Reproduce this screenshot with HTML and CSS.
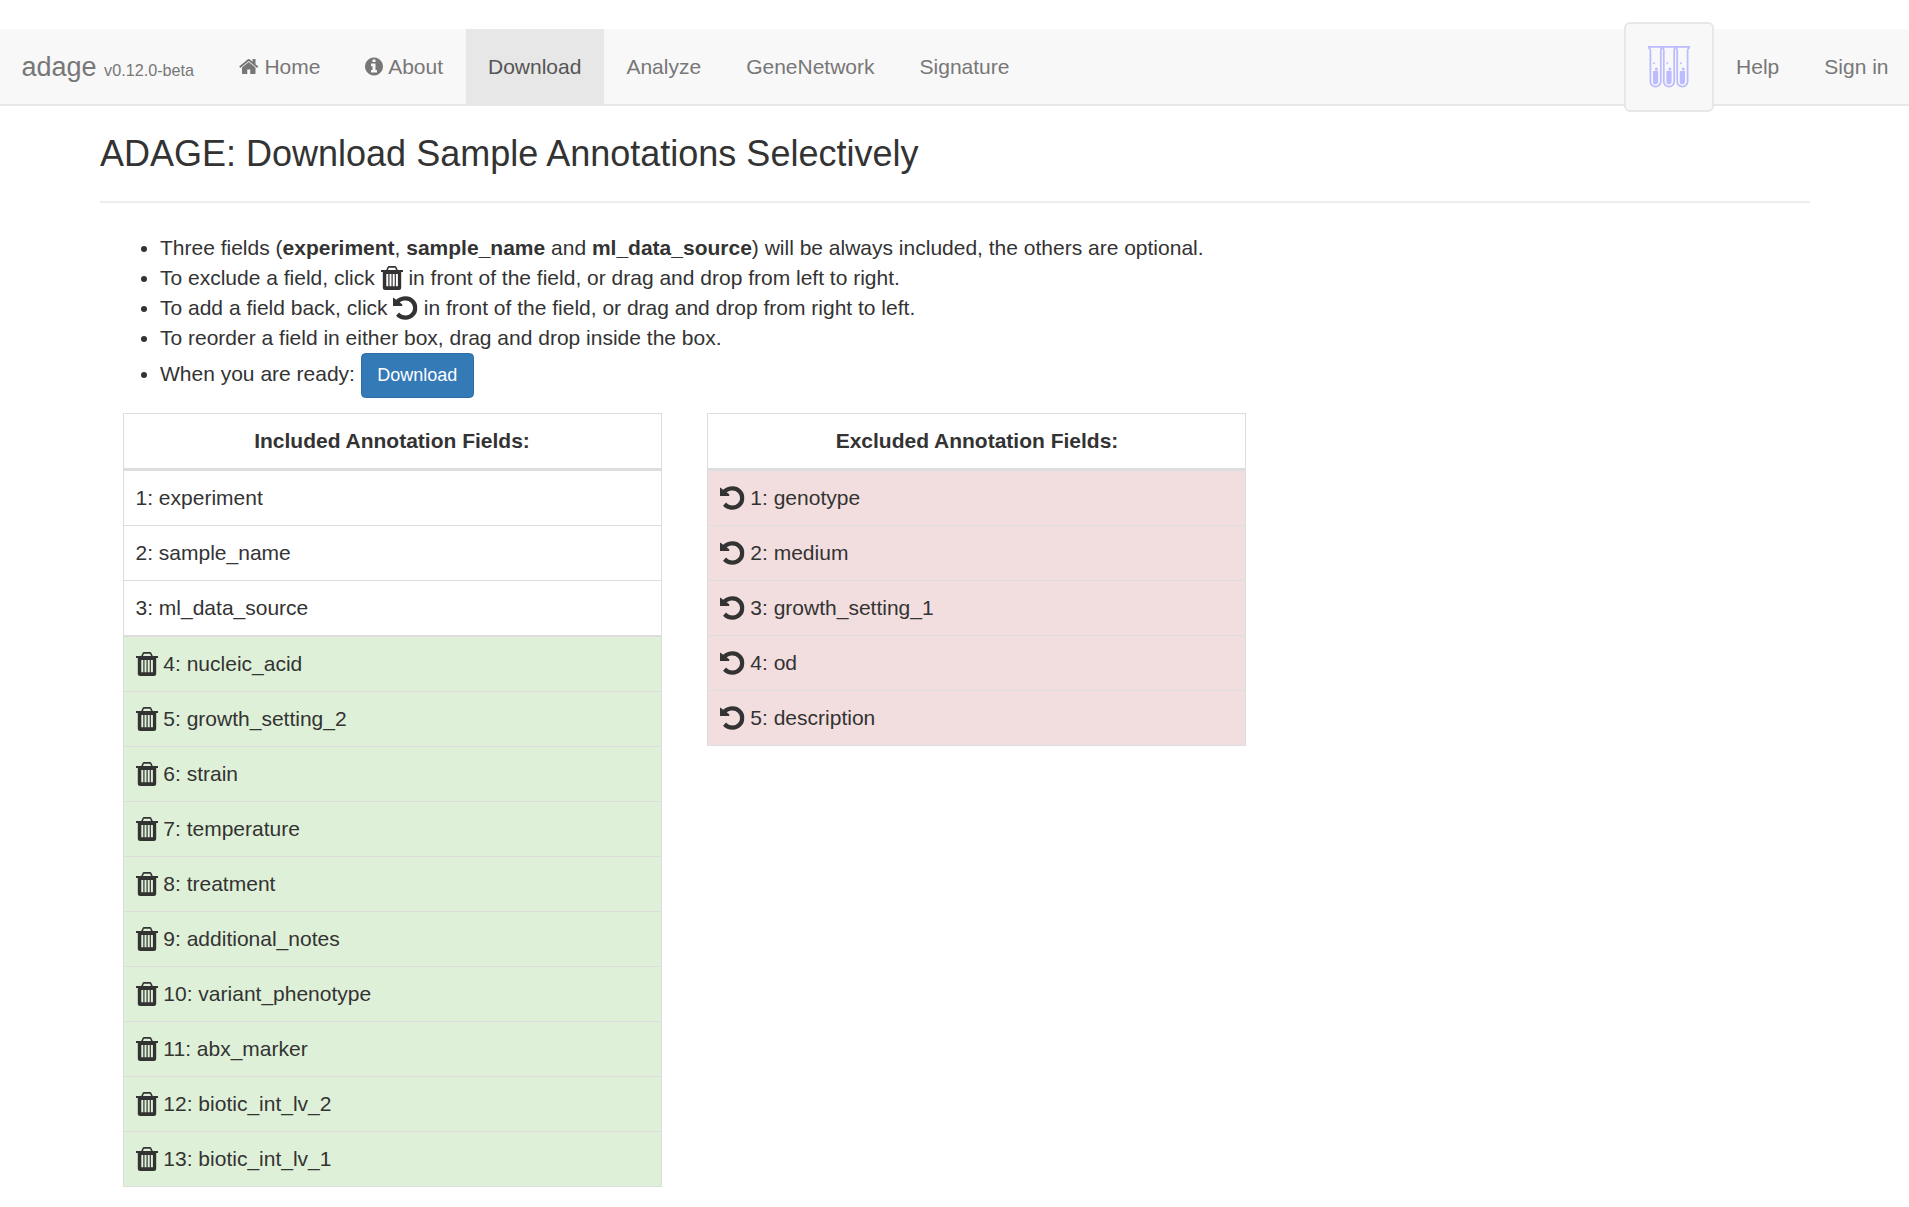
FILE: index.html
```html
<!DOCTYPE html>
<html lang="en">
<head>
<meta charset="utf-8">
<title>adage</title>
<link rel="stylesheet" href="styles.css">
</head>
<body>
<svg class="sprite" aria-hidden="true">
  <symbol id="trash" viewBox="0 0 22 24">
    <path fill-rule="evenodd" d="M0 4h5.200L6.600.9Q7 0 8 0h6q1 0 1.400.9L16.800 4H22v1.900H20.200V21.500q0 2.500-2.500 2.500H4.300Q1.800 24 1.800 21.500V5.900H0zM7 4h8l-.9-2.200H7.900zM5.300 8v12.200h2V8zM8.500 8v12.200h2V8zM11.700 8v12.200h2V8zM14.900 8v12.200h2V8z"/>
  </symbol>
  <symbol id="undo" viewBox="0 0 25 24">
    <path d="M0 1.200 3.300 3.600C5.800 1.300 9 0 12.900 0A12 12 0 0 1 24.900 12A12 12 0 0 1 12.900 24C8.800 24 5.300 22.400 3.100 19.800L6.200 16.600C7.800 18.500 10.100 19.600 12.900 19.600A7.600 7.600 0 0 0 20.500 12A7.600 7.600 0 0 0 12.900 4.400C10.500 4.400 8.400 5 6.900 6.300L9.400 8.200V10H0z"/>
  </symbol>
</svg>

<nav class="navbar">
  <a class="brand">adage <small>v0.12.0-beta</small></a>
  <a class="nav-link"><svg class="nav-icon home" viewBox="64 0 1664 1792"><path d="M1472 992v480q0 26-19 45t-45 19h-384v-384h-256v384h-384q-26 0-45-19t-19-45v-480q0-1 .5-3t.5-3l575-474 575 474q1 2 1 6zm223-69l-62 74q-8 9-21 11h-3q-13 0-21-7l-692-577-692 577q-12 8-24 7-13-2-21-11l-62-74q-8-10-7-23.500t11-21.500l719-599q32-26 76-26t76 26l244 204v-195q0-14 9-23t23-9h192q14 0 23 9t9 23v408l219 182q10 8 11 21.500t-7 23.500z"/></svg> Home</a>
  <a class="nav-link"><svg class="nav-icon info" viewBox="128 0 1536 1792"><path d="M1152 1376v-160q0-14-9-23t-23-9h-96v-512q0-14-9-23t-23-9h-320q-14 0-23 9t-9 23v160q0 14 9 23t23 9h96v320h-96q-14 0-23 9t-9 23v160q0 14 9 23t23 9h448q14 0 23-9t9-23zm-128-896v-160q0-14-9-23t-23-9h-192q-14 0-23 9t-9 23v160q0 14 9 23t23 9h192q14 0 23-9t9-23zm640 416q0 209-103 385.500t-279.500 279.500-385.500 103-385.500-103-279.500-279.500-103-385.500 103-385.500 279.500-279.500 385.500-103 385.500 103 279.500 279.500 103 385.500z"/></svg> About</a>
  <a class="nav-link active">Download</a>
  <a class="nav-link">Analyze</a>
  <a class="nav-link">GeneNetwork</a>
  <a class="nav-link">Signature</a>
  <a class="basket">
    <svg width="42" height="42" viewBox="0 0 42 42">
      <g fill="none" stroke="#bbbbff" stroke-width="1.750">
        <path d="M.7 2.500V.9H41.300V2.500"/>
        <path d="M.7 2Q2.400 2.500 2.400 4.500V35.500a5.200 5.200 0 0 0 10.400 0V4.500Q12.800 2.500 14.100 1"/>
        <path d="M14.100 1Q15.800 2.500 15.800 4.500V35.500a5.200 5.200 0 0 0 10.400 0V4.500Q26.200 2.500 27.700 1"/>
        <path d="M27.700 1Q29.200 2.500 29.200 4.500V35.500a5.200 5.200 0 0 0 10.400 0V4.500Q39.600 2.500 41.300 2"/>
      </g>
      <g fill="#bbbbff">
        <path d="M5 25h5.200v11a2.600 2.300 0 0 1-5.200 0zM18.400 25h5.200v11a2.600 2.300 0 0 1-5.200 0zM31.800 25h5.200v11a2.600 2.300 0 0 1-5.200 0z"/>
        <circle cx="8.400" cy="23" r="1.500"/><circle cx="21.800" cy="23" r="1.500"/><circle cx="35.200" cy="23" r="1.500"/>
        <circle cx="6" cy="17.300" r="1"/><circle cx="19.400" cy="17.300" r="1"/><circle cx="32.800" cy="17.300" r="1"/>
      </g>
    </svg>
  </a>
  <a class="nav-link">Help</a>
  <a class="nav-link">Sign in</a>
</nav>

<main class="container">
  <h2 class="page-header">ADAGE: Download Sample Annotations Selectively</h2>
  <ul class="instructions">
    <li>Three fields (<b>experiment</b>, <b>sample_name</b> and <b>ml_data_source</b>) will be always included, the others are optional.</li>
    <li>To exclude a field, click <svg class="icon trash"><use href="#trash"/></svg> in front of the field, or drag and drop from left to right.</li>
    <li>To add a field back, click <svg class="icon undo"><use href="#undo"/></svg> in front of the field, or drag and drop from right to left.</li>
    <li>To reorder a field in either box, drag and drop inside the box.</li>
    <li>When you are ready: <button class="btn">Download</button></li>
  </ul>
  <div class="tables">
    <table class="fields included">
      <thead><tr><th>Included Annotation Fields:</th></tr></thead>
      <tbody class="required">
        <tr><td>1: experiment</td></tr>
        <tr><td>2: sample_name</td></tr>
        <tr><td>3: ml_data_source</td></tr>
      </tbody>
      <tbody class="success">
        <tr><td><svg class="icon trash"><use href="#trash"/></svg> 4: nucleic_acid</td></tr>
        <tr><td><svg class="icon trash"><use href="#trash"/></svg> 5: growth_setting_2</td></tr>
        <tr><td><svg class="icon trash"><use href="#trash"/></svg> 6: strain</td></tr>
        <tr><td><svg class="icon trash"><use href="#trash"/></svg> 7: temperature</td></tr>
        <tr><td><svg class="icon trash"><use href="#trash"/></svg> 8: treatment</td></tr>
        <tr><td><svg class="icon trash"><use href="#trash"/></svg> 9: additional_notes</td></tr>
        <tr><td><svg class="icon trash"><use href="#trash"/></svg> 10: variant_phenotype</td></tr>
        <tr><td><svg class="icon trash"><use href="#trash"/></svg> 11: abx_marker</td></tr>
        <tr><td><svg class="icon trash"><use href="#trash"/></svg> 12: biotic_int_lv_2</td></tr>
        <tr><td><svg class="icon trash"><use href="#trash"/></svg> 13: biotic_int_lv_1</td></tr>
      </tbody>
    </table>
    <table class="fields excluded">
      <thead><tr><th>Excluded Annotation Fields:</th></tr></thead>
      <tbody class="danger">
        <tr><td><svg class="icon undo"><use href="#undo"/></svg> 1: genotype</td></tr>
        <tr><td><svg class="icon undo"><use href="#undo"/></svg> 2: medium</td></tr>
        <tr><td><svg class="icon undo"><use href="#undo"/></svg> 3: growth_setting_1</td></tr>
        <tr><td><svg class="icon undo"><use href="#undo"/></svg> 4: od</td></tr>
        <tr><td><svg class="icon undo"><use href="#undo"/></svg> 5: description</td></tr>
      </tbody>
    </table>
  </div>
</main>
</body>
</html>
```
FILE: styles.css
```css
* { box-sizing: border-box; }
body {
  margin: 0;
  padding-top: 29px;
  background: #fff;
  color: #333;
  font: 21px/30px "Liberation Sans", Arial, sans-serif;
}
.sprite { display: none; }

.navbar {
  display: flex;
  height: 77px;
  background: #f8f8f8;
  border-bottom: 2px solid #e7e7e7;
  color: #777;
}
.brand {
  padding: 22.5px 22.5px 0 21.5px;
  font-size: 27px;
  white-space: nowrap;
}
.brand small { font-size: 16.2px; }
.nav-link {
  height: 75px;
  padding: 22.5px 22.5px 0;
  white-space: nowrap;
}
.nav-link:last-child { padding-right: 20.5px; }
.nav-link.active {
  height: 77px;
  background: #e7e7e7;
  color: #555;
}
.nav-icon {
  height: 21px;
  fill: currentColor;
  vertical-align: -3px;
}
.nav-icon.home { width: 19.5px; }
.nav-icon.info { width: 18px; }
.basket {
  display: flex;
  align-items: center;
  justify-content: center;
  width: 90px;
  height: 90px;
  margin: -7px 0 -8px auto;
  background: #f8f8f8;
  border: 2px solid #e7e7e7;
  border-radius: 6px;
}

.container {
  width: 1710px;
  margin-left: 100px;
}
.page-header {
  margin: 0;
  padding: 27.5px 0 28px;
  border-bottom: 2px solid #eee;
  font-size: 36px;
  font-weight: 400;
  line-height: 39.5px;
}
.instructions {
  margin: 30px 0 15px;
  padding-left: 60px;
}
.btn {
  width: 113px;
  height: 45px;
  padding: 0;
  background: #337ab7;
  border: 1.5px solid #2e6da4;
  border-radius: 4.5px;
  color: #fff;
  font: 18px/27px "Liberation Sans", Arial, sans-serif;
  vertical-align: baseline;
}
.icon {
  height: 24px;
  fill: #333;
  vertical-align: baseline;
  margin: -5px 0;
  overflow: visible;
}
.icon.trash { width: 22px; }
.icon.undo { width: 24.5px; }

.tables {
  display: flex;
  align-items: flex-start;
  gap: 45.5px;
  padding-left: 22.5px;
}
.fields {
  width: 539px;
  border: 1px solid #ddd;
  border-bottom: 0;
  border-spacing: 0;
}
.fields th {
  padding: 12px;
  border-bottom: 3px solid #ddd;
}
.excluded th { padding-left: 13px; }
.fields td {
  height: 55px;
  padding: 12px;
  border-bottom: 1px solid #ddd;
}
.required tr:last-child td {
  height: 56px;
  border-bottom-width: 2px;
}
.success td { background: #dff0d8; }
.danger td { background: #f2dede; }
```
